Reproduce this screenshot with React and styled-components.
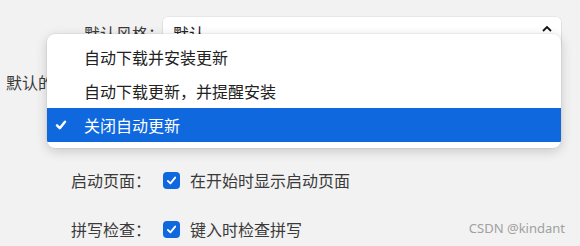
import React from 'react';
import styled, { createGlobalStyle } from 'styled-components';

const GlobalStyle = createGlobalStyle`
  html, body {
    margin: 0;
    padding: 0;
    background: #f2f2f2;
  }
  body {
    font-family: "Noto Sans CJK SC", "Noto Sans", sans-serif;
    color: #333;
  }
`;

const Page = styled.div`
  position: relative;
  width: 580px;
  height: 246px;
  overflow: hidden;
  background: #f2f2f2;
`;

const Form = styled.div`
  display: flex;
  flex-direction: column;
  gap: 17px;
  padding-top: 17px;
`;

const Row = styled.div`
  display: flex;
  align-items: center;
  height: 32px;
  padding-left: ${(props) => props.$indent}px;
`;

const Label = styled.span`
  font-size: 16px;
  line-height: 32px;
  color: #3a3a3a;
  white-space: nowrap;
  overflow: hidden;
  width: ${(props) => props.$width}px;
  flex-shrink: 0;
`;

const SelectBox = styled.div`
  display: flex;
  align-items: center;
  justify-content: space-between;
  width: 398px;
  height: 32px;
  box-sizing: border-box;
  padding: 0 8px 0 10px;
  background: linear-gradient(#ffffff 60%, #f7f7f7);
  border-radius: 5px;
  box-shadow: 0 0 0 0.5px rgba(0, 0, 0, 0.08), 0 1px 2px rgba(0, 0, 0, 0.12);
  font-size: 16px;
  color: #222;
`;

const CheckBox = styled.span`
  display: inline-flex;
  align-items: center;
  justify-content: center;
  width: 17px;
  height: 17px;
  border-radius: 4px;
  background: #1068de;
  margin-right: 10px;
`;

const CheckText = styled.span`
  font-size: 16px;
  color: #3a3a3a;
`;

const Popup = styled.div`
  position: absolute;
  left: 47px;
  top: 34px;
  width: 514px;
  padding: 6px 0;
  background: #fff;
  border-radius: 8px;
  box-shadow: 0 3px 12px rgba(0, 0, 0, 0.18), 0 0 0 0.5px rgba(0, 0, 0, 0.08);
  overflow: hidden;
`;

const Option = styled.div`
  position: relative;
  display: flex;
  align-items: center;
  height: 34px;
  padding-left: 37px;
  font-size: 16px;
  color: ${(props) => (props.$selected ? '#fff' : '#222')};
  background: ${(props) => (props.$selected ? '#1068de' : 'transparent')};
`;

const Tick = styled.span`
  position: absolute;
  left: 8px;
  top: 11px;
  display: flex;
`;

const Watermark = styled.span`
  position: absolute;
  right: 15px;
  bottom: 9px;
  font-family: "Noto Sans", "Liberation Sans", sans-serif;
  font-size: 13px;
  color: #a0a0a0;
`;

const Stepper = () => (
  <svg width="12" height="22" viewBox="0 0 12 22">
    <path d="M2 9 L6 5 L10 9" fill="none" stroke="#111" strokeWidth="1.8" />
    <path d="M2 14 L6 18 L10 14" fill="none" stroke="#111" strokeWidth="1.8" />
  </svg>
);

const CheckIcon = ({ size = 11, weight = 2 }) => (
  <svg width={size} height={size} viewBox="0 0 12 12">
    <path
      d="M2 6.4 L4.8 9.2 L10 2.8"
      fill="none"
      stroke="#fff"
      strokeWidth={weight}
      strokeLinecap="round"
      strokeLinejoin="round"
    />
  </svg>
);

const options = ['自动下载并安装更新', '自动下载更新，并提醒安装', '关闭自动更新'];

const App = () => {
  const selected = 2;

  return (
    <Page>
      <GlobalStyle />
      <Form>
        <Row $indent={84}>
          <Label $width={79}>默认风格：</Label>
          <SelectBox>
            <span>默认</span>
            <Stepper />
          </SelectBox>
        </Row>
        {/* 팝업 아래에 가려지는 행 */}
        <Row $indent={6}>
          <Label $width={41}>默认的更新方式：</Label>
        </Row>
        <Row $indent={71} />
        <Row $indent={71}>
          <Label $width={92}>启动页面：</Label>
          <CheckBox>
            <CheckIcon />
          </CheckBox>
          <CheckText>在开始时显示启动页面</CheckText>
        </Row>
        <Row $indent={71}>
          <Label $width={92}>拼写检查：</Label>
          <CheckBox>
            <CheckIcon />
          </CheckBox>
          <CheckText>键入时检查拼写</CheckText>
        </Row>
      </Form>

      <Popup>
        {options.map((text, i) => (
          <Option key={text} $selected={i === selected}>
            {i === selected && (
              <Tick>
                <CheckIcon size={12} weight={2.5} />
              </Tick>
            )}
            {text}
          </Option>
        ))}
      </Popup>

      <Watermark>CSDN @kindant</Watermark>
    </Page>
  );
};

export default App;
